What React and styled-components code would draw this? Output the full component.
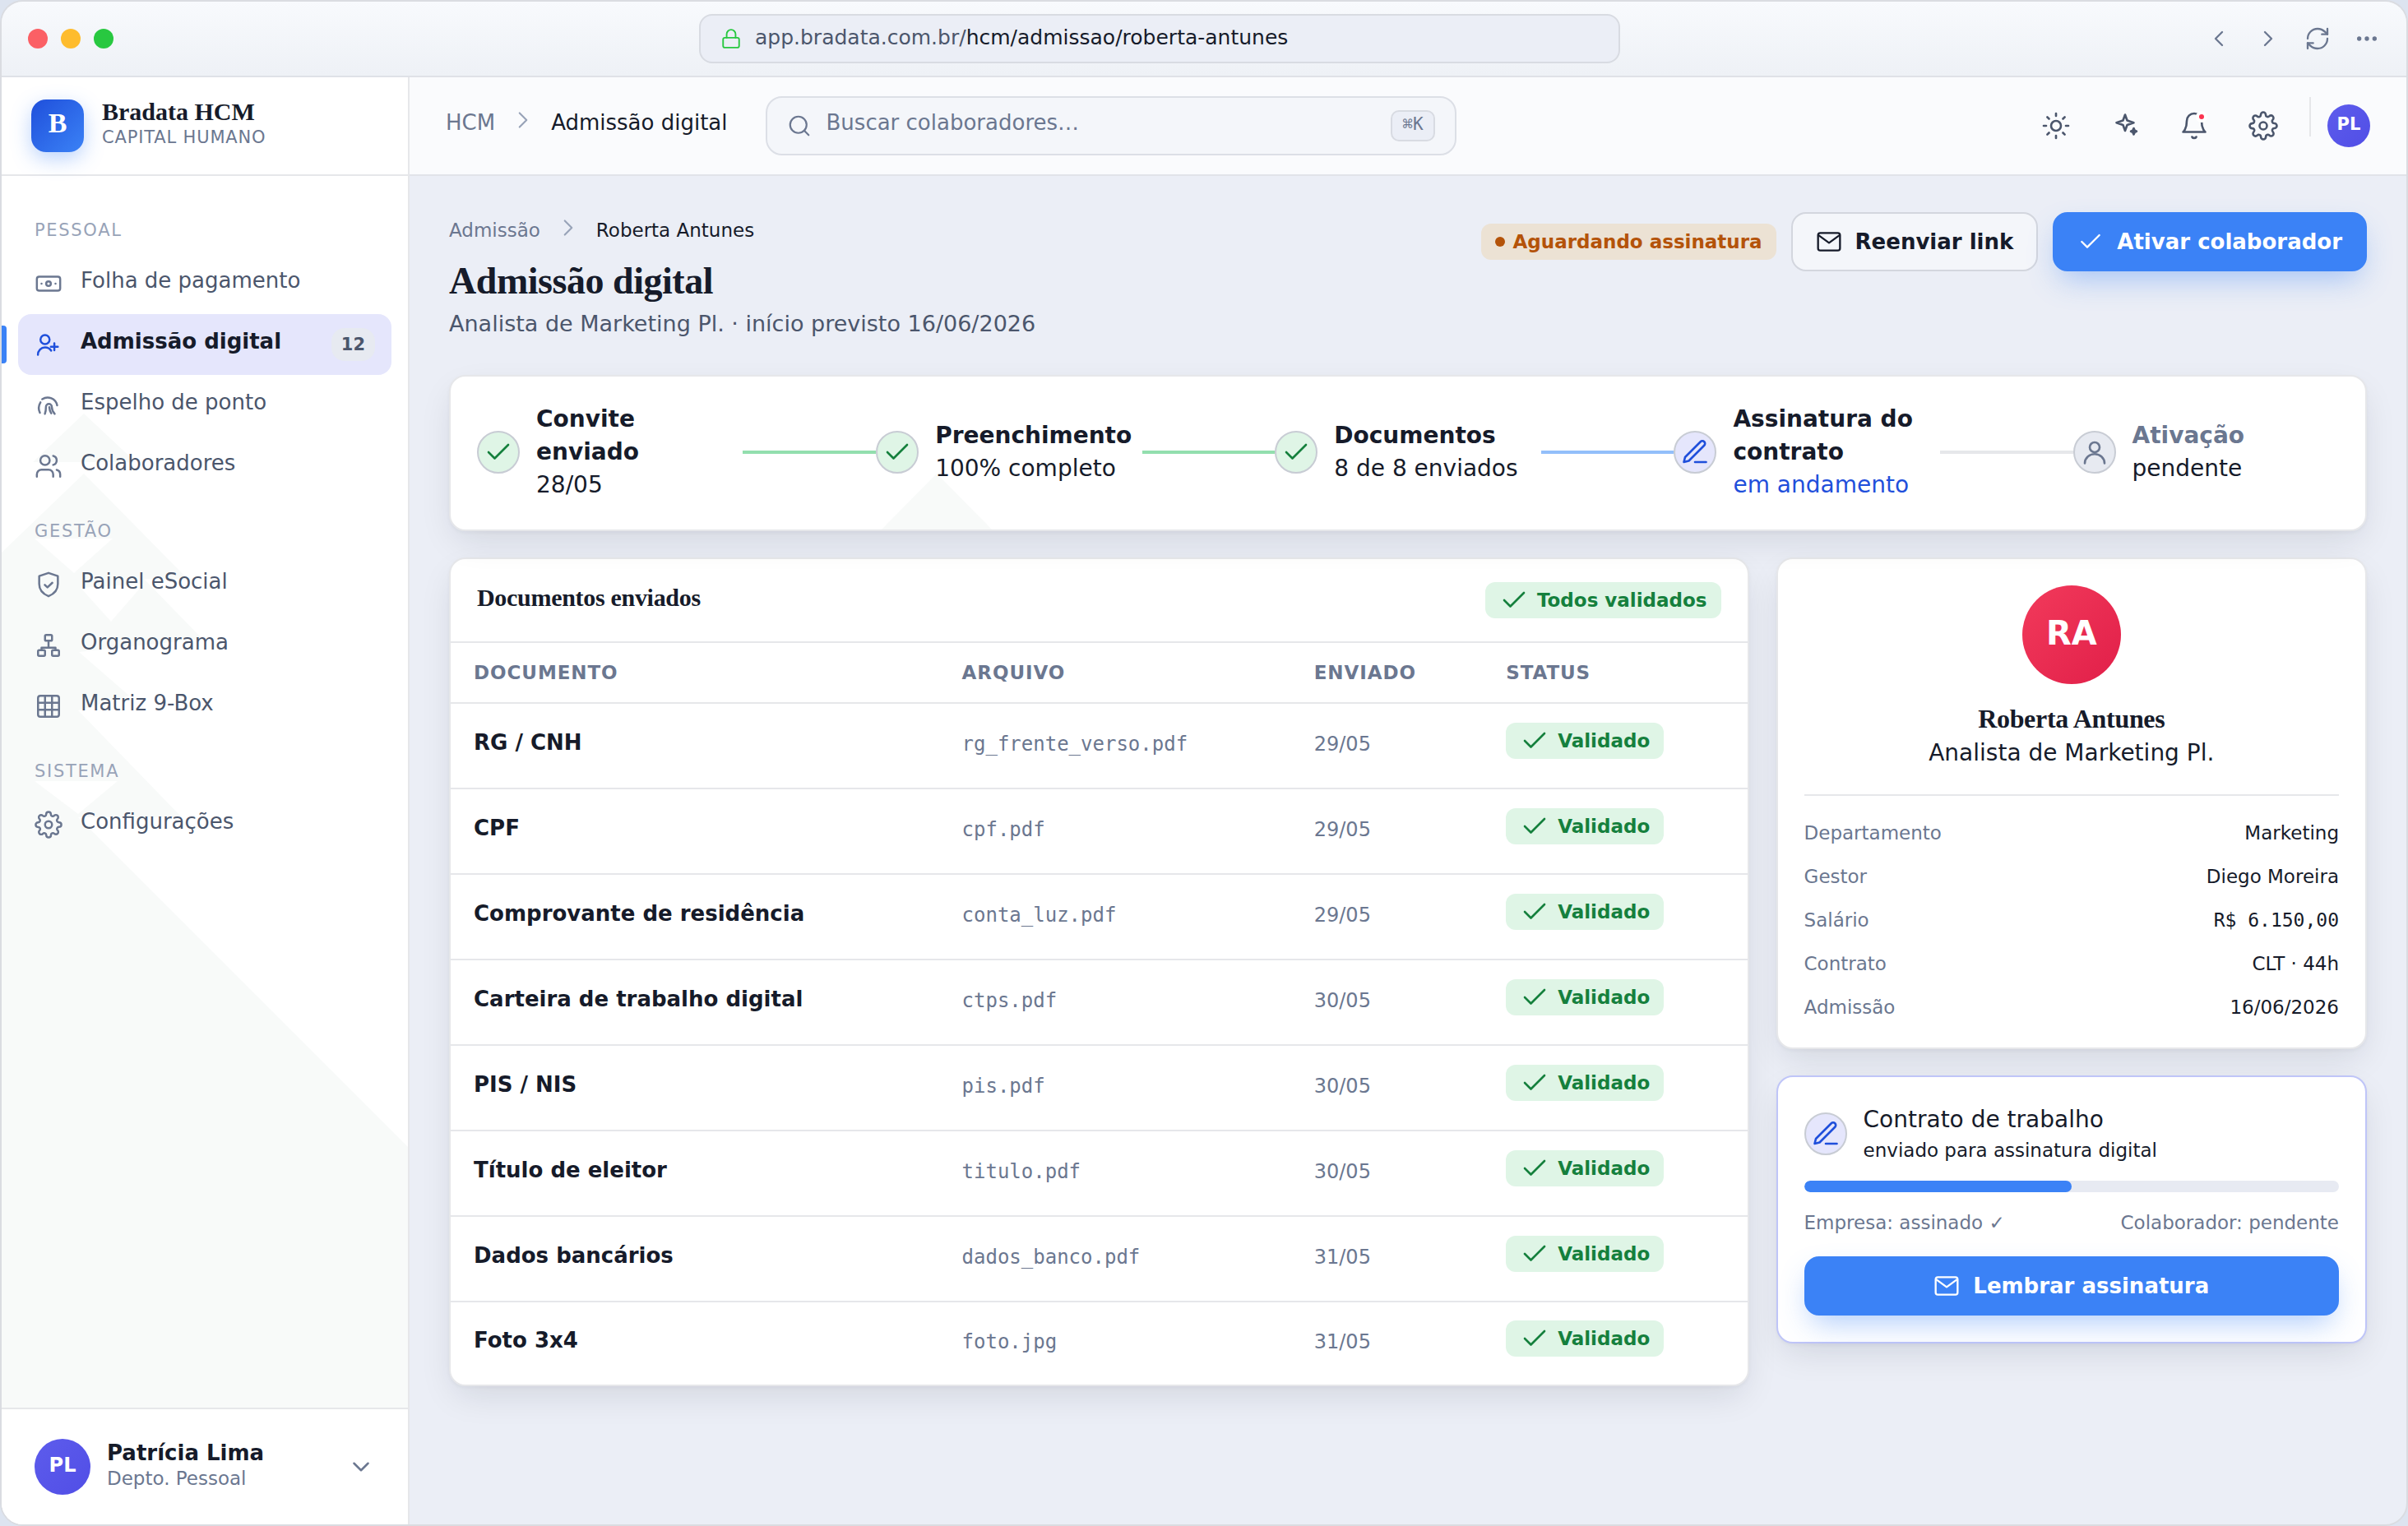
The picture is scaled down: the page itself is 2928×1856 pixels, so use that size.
import React from "react";
import styled, { createGlobalStyle } from "styled-components";
import {
  Banknote,
  Check,
  ChevronDown,
  ChevronLeft,
  ChevronRight,
  Ellipsis,
  Grid3x3,
  Lock,
  RefreshCw,
  Search,
  Sun,
  Users,
} from "lucide-react";
import { FiSettings } from "react-icons/fi";

const COLORS = {
  ink: "#161b2a",
  slate: "#4b566c",
  muted: "#6b7790",
  faint: "#98a3b8",
  line: "#e6e7ea",
  control: "#d8dbe2",
  canvas: "#ebeef6",
  surface: "#f4f6fa",
  primary: "#3b82f6",
  primaryDark: "#1f4fdb",
  primarySoft: "#e5e6fc",
  success: "#15803d",
  successSoft: "#dff5e6",
  warning: "#b45309",
  warningSoft: "#ece2d4",
  facet: "#f8faf9",
};

const FONTS = {
  sans: `"DejaVu Sans", sans-serif`,
  serif: `"Liberation Serif", serif`,
  mono: `"DejaVu Sans Mono", monospace`,
};

/* Icons that the packages do not have in this cut */

const Glyph = ({ size, children, ...rest }) => (
  <svg
    width={size}
    height={size}
    viewBox="0 0 24 24"
    fill="none"
    stroke="currentColor"
    strokeWidth={1.75}
    strokeLinecap="round"
    strokeLinejoin="round"
    aria-hidden="true"
    {...rest}
  >
    {children}
  </svg>
);

const UserPlusIcon = (props) => (
  <Glyph {...props}>
    <circle cx="9" cy="7.8" r="3.9" />
    <path d="M2.9 20.9c0-3.6 2.7-6.4 6.1-6.4 2.2 0 4.1 1 5.3 2.8" />
    <path d="M17 11v6M14 14h6" />
  </Glyph>
);

const FingerprintIcon = (props) => (
  <Glyph {...props}>
    <path d="M6.6 6.7A8.3 8.3 0 0 1 19.4 12" />
    <path d="M5.1 9.4a9.6 9.6 0 0 0-.5 9" />
    <path d="M8.9 19.3c.7-1.7.9-3.5.9-6a2.5 2.5 0 0 1 5 0c0 2.4.9 4.3 2.5 6" />
    <path d="M12.7 13.5c.1 2.1.6 3.8 1.6 5.3" />
  </Glyph>
);

const ShieldIcon = (props) => (
  <Glyph {...props}>
    <path d="M12 2l8 2.7v6.8c0 5-3.3 8.6-8 10.5-4.7-1.9-8-5.5-8-10.5V4.7z" />
    <path d="M8.8 12.2l2.3 2.2 4.2-4" />
  </Glyph>
);

const OrgIcon = (props) => (
  <Glyph {...props}>
    <rect x="9" y="3" width="6" height="5" rx="1" />
    <rect x="3" y="16" width="6" height="5" rx="1" />
    <rect x="15" y="16" width="6" height="5" rx="1" />
    <path d="M12 8v5.5M6 16v-2h12v2" />
  </Glyph>
);

const SparklesIcon = (props) => (
  <Glyph {...props}>
    <path d="M12 3l1.7 4.7L19 9.5l-5.3 1.8L12 16l-1.7-4.7L5 9.5l5.3-1.8z" />
    <path
      fill="currentColor"
      d="M19 14l.8 1.8 1.5.7-1.5.7L19 19l-.8-1.8-1.5-.7 1.5-.7z"
    />
  </Glyph>
);

const BellIcon = (props) => (
  <Glyph {...props}>
    <path d="M6 8a6 6 0 0 1 12 0c0 7 3 9 3 9H3s3-2 3-9" />
    <path d="M10.3 21a1.94 1.94 0 0 0 3.4 0" />
  </Glyph>
);

const MailIcon = (props) => (
  <Glyph {...props}>
    <rect x="2" y="4" width="20" height="16" rx="2" />
    <path d="M3 6.5l9 6.5 9-6.5" />
  </Glyph>
);

const PenIcon = (props) => (
  <Glyph {...props}>
    <path d="M12 20h9" />
    <path d="M16.5 3.5a2.12 2.12 0 0 1 3 3L7 19l-4 1 1-4Z" />
  </Glyph>
);

const PersonIcon = (props) => (
  <Glyph {...props}>
    <circle cx="12" cy="8" r="4" />
    <path d="M4 21a8 7.5 0 0 1 16 0" />
  </Glyph>
);

const NAV = [
  {
    title: "Pessoal",
    items: [
      { label: "Folha de pagamento", icon: Banknote },
      { label: "Admissão digital", icon: UserPlusIcon, active: true, count: 12 },
      { label: "Espelho de ponto", icon: FingerprintIcon },
      { label: "Colaboradores", icon: Users },
    ],
  },
  {
    title: "Gestão",
    items: [
      { label: "Painel eSocial", icon: ShieldIcon },
      { label: "Organograma", icon: OrgIcon },
      { label: "Matriz 9-Box", icon: Grid3x3 },
    ],
  },
  {
    title: "Sistema",
    items: [{ label: "Configurações", icon: FiSettings }],
  },
];

const STEPS = [
  { title: "Convite enviado", detail: "28/05", state: "done" },
  { title: "Preenchimento", detail: "100% completo", state: "done" },
  { title: "Documentos", detail: "8 de 8 enviados", state: "done" },
  { title: "Assinatura do contrato", detail: "em andamento", state: "current" },
  { title: "Ativação", detail: "pendente", state: "pending" },
];

const STEP_ICONS = { done: Check, current: PenIcon, pending: PersonIcon };

const DOCUMENTS = [
  { name: "RG / CNH", file: "rg_frente_verso.pdf", sent: "29/05" },
  { name: "CPF", file: "cpf.pdf", sent: "29/05" },
  { name: "Comprovante de residência", file: "conta_luz.pdf", sent: "29/05" },
  { name: "Carteira de trabalho digital", file: "ctps.pdf", sent: "30/05" },
  { name: "PIS / NIS", file: "pis.pdf", sent: "30/05" },
  { name: "Título de eleitor", file: "titulo.pdf", sent: "30/05" },
  { name: "Dados bancários", file: "dados_banco.pdf", sent: "31/05" },
  { name: "Foto 3x4", file: "foto.jpg", sent: "31/05" },
];

const FACTS = [
  { label: "Departamento", value: "Marketing" },
  { label: "Gestor", value: "Diego Moreira" },
  { label: "Salário", value: "R$ 6.150,00", mono: true },
  { label: "Contrato", value: "CLT · 44h" },
  { label: "Admissão", value: "16/06/2026" },
];

const BrowserBar = () => (
  <Chrome>
    <Lights>
      <Light $color="#fb6065" />
      <Light $color="#febc2e" />
      <Light $color="#28c840" />
    </Lights>
    <AddressBar>
      <Lock size={26} color="#28c840" strokeWidth={1.75} />
      <Address>
        app.bradata.com.br/<strong>hcm/admissao/roberta-antunes</strong>
      </Address>
    </AddressBar>
    <ChromeActions>
      <ChromeButton aria-label="Voltar">
        <ChevronLeft size={32} strokeWidth={1.75} />
      </ChromeButton>
      <ChromeButton aria-label="Avançar">
        <ChevronRight size={32} strokeWidth={1.75} />
      </ChromeButton>
      <ChromeButton aria-label="Recarregar">
        <RefreshCw size={32} strokeWidth={1.75} />
      </ChromeButton>
      <ChromeButton aria-label="Mais">
        <Ellipsis size={32} strokeWidth={2} />
      </ChromeButton>
    </ChromeActions>
  </Chrome>
);

const Sidebar = () => (
  <Aside>
    <Brand>
      <Logo>B</Logo>
      <TextPair>
        <BrandName>Bradata HCM</BrandName>
        <BrandTagline>Capital humano</BrandTagline>
      </TextPair>
    </Brand>
    <Nav>
      <NavBackdrop aria-hidden="true">
        <path
          fill={COLORS.facet}
          d="M100 289l63 59H38zM100 362L226 490h-53l71 73-150 16 61 53-62 18 126 130H93l401 401v1500H0V458z"
        />
        <path
          fill="#fff"
          d="M40 441h95l-47 42zM96 501l77-5-40 46zM40 736h101l-48 40z"
        />
      </NavBackdrop>
      {NAV.map((group) => (
        <NavGroup key={group.title}>
          <NavTitle>{group.title}</NavTitle>
          {group.items.map(({ label, icon: Icon, active, count }) => (
            <NavItem key={label} href="#" $active={active}>
              <Icon size={34} strokeWidth={1.75} />
              <NavLabel>{label}</NavLabel>
              {count && <Count>{count}</Count>}
            </NavItem>
          ))}
        </NavGroup>
      ))}
    </Nav>
    <Account>
      <Avatar $size={68} $fontSize={24}>
        PL
      </Avatar>
      <TextPair>
        <AccountName>Patrícia Lima</AccountName>
        <AccountRole>Depto. Pessoal</AccountRole>
      </TextPair>
      <ChevronDown size={34} strokeWidth={1.75} color={COLORS.muted} />
    </Account>
  </Aside>
);

const TopBar = () => (
  <Header>
    <TopCrumbs>
      <a href="#">HCM</a>
      <ChevronRight size={34} strokeWidth={1.5} />
      <strong>Admissão digital</strong>
    </TopCrumbs>
    <SearchBox>
      <Search size={30} strokeWidth={1.75} />
      <SearchInput
        type="search"
        aria-label="Buscar colaboradores"
        placeholder="Buscar colaboradores…"
      />
      <Shortcut>⌘K</Shortcut>
    </SearchBox>
    <Tools>
      <ToolButton aria-label="Tema">
        <Sun size={36} strokeWidth={1.75} />
      </ToolButton>
      <ToolButton aria-label="Assistente">
        <SparklesIcon size={36} />
      </ToolButton>
      <ToolButton aria-label="Notificações">
        <BellIcon size={36} />
        <UnreadDot />
      </ToolButton>
      <ToolButton aria-label="Configurações">
        <FiSettings size={36} strokeWidth={1.75} />
      </ToolButton>
    </Tools>
    <Divider />
    <Avatar $size={52} $fontSize={21}>
      PL
    </Avatar>
  </Header>
);

const Stepper = () => (
  <StepsCard>
    <StepsBackdrop width="134" height="68" aria-hidden="true">
      <path fill={COLORS.facet} d="M67 0l67 68H0z" />
    </StepsBackdrop>
    {STEPS.map(({ title, detail, state }, index) => {
      const Icon = STEP_ICONS[state];
      return (
        <React.Fragment key={title}>
          {index > 0 && <Connector $state={state} />}
          <Step>
            <StepBadge $state={state}>
              <Icon size={36} strokeWidth={1.75} />
            </StepBadge>
            <StepText>
              <StepTitle $state={state}>{title}</StepTitle>
              <StepDetail $state={state}>{detail}</StepDetail>
            </StepText>
          </Step>
        </React.Fragment>
      );
    })}
  </StepsCard>
);

const Documents = () => (
  <Card>
    <CardHeader>
      <CardTitle>Documentos enviados</CardTitle>
      <Tag $tone="success">
        <Check size={36} strokeWidth={1.75} />
        Todos validados
      </Tag>
    </CardHeader>
    <Table>
      <thead>
        <tr>
          <HeadCell scope="col">Documento</HeadCell>
          <HeadCell scope="col">Arquivo</HeadCell>
          <HeadCell scope="col">Enviado</HeadCell>
          <HeadCell scope="col">Status</HeadCell>
        </tr>
      </thead>
      <tbody>
        {DOCUMENTS.map(({ name, file, sent }) => (
          <Row key={file}>
            <NameCell>{name}</NameCell>
            <FileCell>{file}</FileCell>
            <MutedCell>{sent}</MutedCell>
            <Cell>
              <Tag $tone="success">
                <Check size={36} strokeWidth={1.75} />
                Validado
              </Tag>
            </Cell>
          </Row>
        ))}
      </tbody>
    </Table>
  </Card>
);

const Profile = () => (
  <PaddedCard>
    <ProfileHead>
      <Avatar $size={120} $fontSize={40} $tone="rose">
        RA
      </Avatar>
      <ProfileName>Roberta Antunes</ProfileName>
      <ProfileRole>Analista de Marketing Pl.</ProfileRole>
    </ProfileHead>
    <Facts>
      {FACTS.map(({ label, value, mono }) => (
        <Fact key={label}>
          <dt>{label}</dt>
          <FactValue $mono={mono}>{value}</FactValue>
        </Fact>
      ))}
    </Facts>
  </PaddedCard>
);

const Contract = ({ progress }) => (
  <PaddedCard $highlight>
    <ContractHead>
      <StepBadge $state="current">
        <PenIcon size={36} />
      </StepBadge>
      <div>
        <ContractTitle>Contrato de trabalho</ContractTitle>
        <ContractText>enviado para assinatura digital</ContractText>
      </div>
    </ContractHead>
    <ProgressTrack
      role="progressbar"
      aria-label="Assinaturas"
      aria-valuenow={progress}
      aria-valuemin={0}
      aria-valuemax={100}
    >
      <ProgressFill style={{ width: `${progress}%` }} />
    </ProgressTrack>
    <Signatures>
      <span>Empresa: assinado ✓</span>
      <span>Colaborador: pendente</span>
    </Signatures>
    <Button $primary $block>
      <MailIcon size={32} />
      Lembrar assinatura
    </Button>
  </PaddedCard>
);

const App = () => (
  <>
    <GlobalStyle />
    <Window>
      <BrowserBar />
      <Shell>
        <Sidebar />
        <Main>
          <TopBar />
          <Content>
            <PageHeader>
              <div>
                <PageCrumbs>
                  <a href="#">Admissão</a>
                  <ChevronRight size={34} strokeWidth={1.5} />
                  <strong>Roberta Antunes</strong>
                </PageCrumbs>
                <PageTitle>Admissão digital</PageTitle>
                <PageSubtitle>
                  Analista de Marketing Pl. · início previsto 16/06/2026
                </PageSubtitle>
              </div>
              <PageActions>
                <Tag $tone="warning">
                  <TagDot />
                  Aguardando assinatura
                </Tag>
                <Button>
                  <MailIcon size={32} />
                  Reenviar link
                </Button>
                <Button $primary>
                  <Check size={32} strokeWidth={1.75} />
                  Ativar colaborador
                </Button>
              </PageActions>
            </PageHeader>
            <Stepper />
            <Columns>
              <Documents />
              <SideColumn>
                <Profile />
                <Contract progress={50} />
              </SideColumn>
            </Columns>
          </Content>
        </Main>
      </Shell>
    </Window>
  </>
);

const GlobalStyle = createGlobalStyle`
  *, *::before, *::after {
    box-sizing: border-box;
  }

  body {
    margin: 0;
    background: #dde4f0;
    color: ${COLORS.ink};
    font-family: ${FONTS.sans};
    font-size: 26px;
    line-height: 38px;
  }

  a {
    color: inherit;
    text-decoration: none;
  }

  button, input {
    font: inherit;
    color: inherit;
  }

  h1, h2, p, dl, dd {
    margin: 0;
  }

  svg {
    flex-shrink: 0;
  }
`;

const Window = styled.div`
  display: flex;
  flex-direction: column;
  min-height: 100vh;
  border: 2px solid #dadce1;
  border-radius: 28px;
  overflow: hidden;
  background: ${COLORS.canvas};
`;

const Chrome = styled.div`
  display: flex;
  align-items: center;
  height: 92px;
  padding: 0 32px;
  background: linear-gradient(#f8fafd, #eef1f6);
  border-bottom: 2px solid #dfe1e7;
`;

const Lights = styled.div`
  display: flex;
  gap: 16px;
`;

const Light = styled.span`
  width: 24px;
  height: 24px;
  border-radius: 50%;
  background: ${(p) => p.$color};
`;

const AddressBar = styled.div`
  display: flex;
  align-items: center;
  gap: 16px;
  width: 100%;
  max-width: 1120px;
  height: 60px;
  margin: 0 auto;
  padding: 0 24px;
  background: ${COLORS.canvas};
  border: 2px solid ${COLORS.control};
  border-radius: 16px;
`;

const Address = styled.span`
  padding-bottom: 2px;
  font-size: 25px;
  color: ${COLORS.slate};

  strong {
    font-weight: 400;
    color: ${COLORS.ink};
  }
`;

const ChromeActions = styled.div`
  display: flex;
  gap: 28px;
`;

const ChromeButton = styled.button`
  display: flex;
  padding: 0;
  border: 0;
  background: none;
  color: ${COLORS.muted};
`;

const Shell = styled.div`
  display: grid;
  grid-template-columns: 496px minmax(0, 1fr);
  flex: 1;
`;

const Aside = styled.aside`
  display: flex;
  flex-direction: column;
  background: #fff;
  border-right: 2px solid ${COLORS.line};
`;

const Brand = styled.div`
  display: flex;
  align-items: center;
  gap: 22px;
  height: 120px;
  padding: 0 36px;
  border-bottom: 2px solid ${COLORS.line};
`;

const Logo = styled.span`
  display: flex;
  justify-content: center;
  width: 64px;
  height: 64px;
  border-radius: 18px;
  background: linear-gradient(135deg, ${COLORS.primaryDark}, ${COLORS.primary});
  box-shadow: 0 8px 24px rgba(59, 130, 246, 0.35);
  color: #fff;
  font-family: ${FONTS.serif};
  font-size: 34px;
  font-weight: 700;
  line-height: 58px;
`;

const TextPair = styled.div`
  display: flex;
  flex-direction: column;
  flex: 1;
  padding-bottom: 4px;
  text-align: left;
`;

const BrandName = styled.span`
  font-family: ${FONTS.serif};
  font-size: 30px;
  font-weight: 700;
  line-height: 32px;
`;

const BrandTagline = styled.span`
  font-size: 21px;
  line-height: 30px;
  letter-spacing: 0.04em;
  text-transform: uppercase;
  color: ${COLORS.muted};
`;

const Nav = styled.nav`
  position: relative;
  flex: 1;
  padding: 24px 20px;
`;

const NavBackdrop = styled.svg`
  position: absolute;
  top: 0;
  left: 0;
  width: 100%;
  height: 100%;
`;

const NavGroup = styled.div`
  position: relative;
`;

const NavTitle = styled.div`
  height: 70px;
  padding: 27px 20px 0;
  font-size: 21px;
  line-height: 30px;
  letter-spacing: 0.08em;
  text-transform: uppercase;
  color: ${COLORS.faint};
`;

const NavItem = styled.a`
  position: relative;
  display: flex;
  align-items: center;
  gap: 22px;
  height: 74px;
  padding: 0 20px;
  border-radius: 16px;
  color: ${(p) => (p.$active ? COLORS.ink : COLORS.slate)};
  font-weight: ${(p) => (p.$active ? 700 : 400)};
  background: ${(p) => (p.$active ? COLORS.primarySoft : "none")};

  svg {
    color: ${(p) => (p.$active ? COLORS.primaryDark : COLORS.muted)};
  }

  /* marker on the window edge */
  &::before {
    content: "";
    display: ${(p) => (p.$active ? "block" : "none")};
    position: absolute;
    left: -20px;
    top: 14px;
    bottom: 14px;
    width: 6px;
    border-radius: 0 4px 4px 0;
    background: ${COLORS.primary};
  }
`;

const NavLabel = styled.span`
  flex: 1;
  padding-bottom: 8px;
`;

const Count = styled.span`
  padding: 0 12px;
  border-radius: 16px;
  background: #e7eaf1;
  color: ${COLORS.slate};
  font-size: 21px;
  line-height: 40px;
`;

const Account = styled.button`
  display: flex;
  align-items: center;
  gap: 20px;
  padding: 36px 40px;
  border: 0;
  border-top: 2px solid ${COLORS.line};
  background: #fff;
`;

const AccountName = styled.span`
  font-weight: 700;
  line-height: 32px;
`;

const AccountRole = styled.span`
  font-size: 23px;
  line-height: 30px;
  color: ${COLORS.muted};
`;

const Avatar = styled.span`
  display: flex;
  align-items: center;
  justify-content: center;
  flex-shrink: 0;
  width: ${(p) => p.$size}px;
  height: ${(p) => p.$size}px;
  padding-bottom: 4px;
  border-radius: 50%;
  background: ${(p) =>
    p.$tone === "rose"
      ? "linear-gradient(135deg, #f23a5b, #e11f49)"
      : "linear-gradient(135deg, #5d5cec, #514ee6)"};
  color: #fff;
  font-size: ${(p) => p.$fontSize}px;
  font-weight: 700;
`;

const Main = styled.div`
  display: flex;
  flex-direction: column;
`;

const Header = styled.header`
  display: flex;
  align-items: center;
  height: 120px;
  padding: 0 44px;
  background: #fafbfd;
  border-bottom: 2px solid #e1e3e9;
`;

const Crumbs = styled.nav`
  display: flex;
  align-items: center;
  gap: 17px;
  color: ${COLORS.muted};

  strong {
    font-weight: 400;
    color: ${COLORS.ink};
  }

  svg {
    margin-bottom: 6px;
    color: ${COLORS.faint};
  }
`;

const TopCrumbs = styled(Crumbs)`
  margin-right: 46px;
  padding-bottom: 8px;
  white-space: nowrap;
`;

const SearchBox = styled.label`
  display: flex;
  align-items: center;
  gap: 18px;
  flex: 1;
  max-width: 840px;
  height: 72px;
  padding: 0 24px;
  background: ${COLORS.surface};
  border: 2px solid #dcdfe6;
  border-radius: 20px;
  color: ${COLORS.muted};
`;

const SearchInput = styled.input`
  flex: 1;
  min-width: 0;
  padding: 0 0 8px;
  border: 0;
  outline: 0;
  background: none;

  &::placeholder {
    color: ${COLORS.muted};
    opacity: 1;
  }
`;

const Shortcut = styled.kbd`
  padding: 0 12px 4px;
  background: ${COLORS.canvas};
  border: 2px solid ${COLORS.control};
  border-radius: 10px;
  font-family: ${FONTS.mono};
  font-size: 21px;
  line-height: 30px;
`;

const Tools = styled.div`
  display: flex;
  gap: 12px;
  margin-left: auto;
`;

const ToolButton = styled.button`
  position: relative;
  display: flex;
  align-items: center;
  justify-content: center;
  width: 72px;
  height: 72px;
  padding: 0;
  border: 0;
  background: none;
  color: ${COLORS.slate};
`;

const UnreadDot = styled.span`
  position: absolute;
  top: 22px;
  right: 24px;
  width: 6px;
  height: 6px;
  border-radius: 50%;
  background: #fb3350;
  box-shadow: 0 0 0 4px #fff;
`;

const Divider = styled.span`
  align-self: flex-start;
  width: 2px;
  height: 48px;
  margin: 24px 20px 0;
  background: ${COLORS.line};
`;

const Content = styled.main`
  display: flex;
  flex-direction: column;
  gap: 32px;
  padding: 44px 48px;
`;

const PageHeader = styled.div`
  display: flex;
  align-items: flex-start;
  justify-content: space-between;
  padding-bottom: 10px;
`;

const PageCrumbs = styled(Crumbs)`
  height: 38px;
  padding-top: 6px;
  font-size: 23px;
`;

const PageTitle = styled.h1`
  margin-top: 18px;
  font-family: ${FONTS.serif};
  font-size: 46px;
  font-weight: 700;
  line-height: 56px;
  letter-spacing: -0.01em;
`;

const PageSubtitle = styled.p`
  margin-top: 4px;
  font-size: 27px;
  line-height: 40px;
  color: ${COLORS.slate};
`;

const PageActions = styled.div`
  display: flex;
  align-items: center;
  gap: 18px;
`;

const Button = styled.button`
  display: ${(p) => (p.$block ? "flex" : "inline-flex")};
  align-items: center;
  justify-content: center;
  gap: 16px;
  width: ${(p) => (p.$block ? "100%" : "auto")};
  height: 72px;
  padding: 0 28px;
  border: 2px solid ${(p) => (p.$primary ? COLORS.primary : "#d3d6de")};
  border-radius: 18px;
  background: ${(p) => (p.$primary ? COLORS.primary : COLORS.surface)};
  box-shadow: ${(p) =>
    p.$primary ? "0 16px 36px -8px rgba(59, 130, 246, 0.42)" : "none"};
  color: ${(p) => (p.$primary ? "#fff" : COLORS.ink)};
  font-weight: 700;
  white-space: nowrap;
`;

const Tag = styled.span`
  display: inline-flex;
  align-items: center;
  gap: 10px;
  height: 44px;
  padding: 0 17px;
  border-radius: 12px;
  background: ${(p) =>
    p.$tone === "warning" ? COLORS.warningSoft : COLORS.successSoft};
  color: ${(p) => (p.$tone === "warning" ? COLORS.warning : COLORS.success)};
  font-size: 23px;
  font-weight: 700;
  white-space: nowrap;
`;

const TagDot = styled.span`
  width: 12px;
  height: 12px;
  border-radius: 50%;
  background: currentColor;
`;

const Card = styled.section`
  background: #fff;
  border: 2px solid ${(p) => (p.$highlight ? "#bfc5f8" : COLORS.line)};
  border-radius: 20px;
  box-shadow: 0 2px 4px rgba(15, 23, 42, 0.04),
    0 16px 44px -8px rgba(15, 23, 42, 0.12);
`;

const PaddedCard = styled(Card)`
  padding: 32px;
`;

const StepsCard = styled(Card)`
  position: relative;
  display: flex;
  align-items: center;
  padding: 32px 32px 34px;
`;

const StepsBackdrop = styled.svg`
  position: absolute;
  left: 524px;
  bottom: 0;
`;

const Step = styled.div`
  position: relative;
  display: flex;
  align-items: center;
  flex: 2 1 0;
  gap: 20px;
  min-width: 0;
`;

const stepTones = {
  done: { color: COLORS.success, soft: COLORS.successSoft, line: "#93dfae" },
  current: { color: COLORS.primaryDark, soft: COLORS.primarySoft, line: "#93bffa" },
  pending: { color: COLORS.muted, soft: "#e7eaf1", line: COLORS.line },
};

const StepBadge = styled.span`
  display: flex;
  align-items: center;
  justify-content: center;
  flex-shrink: 0;
  width: 52px;
  height: 52px;
  border: 2px solid #c8ccd4;
  border-radius: 50%;
  background: ${(p) => stepTones[p.$state].soft};
  color: ${(p) => stepTones[p.$state].color};
`;

const StepText = styled.div`
  font-size: 28px;
  line-height: 40px;
`;

const StepTitle = styled.div`
  font-weight: 700;
  color: ${(p) => (p.$state === "pending" ? COLORS.muted : COLORS.ink)};
`;

const StepDetail = styled.div`
  color: ${(p) => (p.$state === "current" ? COLORS.primaryDark : COLORS.ink)};
`;

const Connector = styled.span`
  flex: 1 1 0;
  height: 4px;
  background: ${(p) => stepTones[p.$state].line};
`;

const Columns = styled.div`
  display: grid;
  grid-template-columns: minmax(0, 11fr) minmax(0, 5fr);
  align-items: start;
  gap: 33px;
`;

const SideColumn = styled.div`
  display: flex;
  flex-direction: column;
  gap: 32px;
`;

const CardHeader = styled.div`
  display: flex;
  align-items: center;
  justify-content: space-between;
  padding: 28px 32px;
  border-bottom: 2px solid ${COLORS.line};
`;

const CardTitle = styled.h2`
  padding-bottom: 6px;
  font-family: ${FONTS.serif};
  font-size: 30px;
  font-weight: 700;
  letter-spacing: -0.01em;
`;

const Table = styled.table`
  width: 100%;
  border-collapse: separate;
  border-spacing: 0;
`;

const HeadCell = styled.th`
  height: 74px;
  padding: 0 28px;
  border-bottom: 2px solid ${COLORS.line};
  font-size: 23px;
  letter-spacing: 0.04em;
  text-align: left;
  text-transform: uppercase;
  color: ${COLORS.muted};
`;

const Cell = styled.td`
  height: 104px;
  padding: 0 28px 6px;
  border-bottom: 2px solid ${COLORS.line};
`;

const NameCell = styled(Cell)`
  padding-bottom: 8px;
  font-weight: 700;
`;

const MutedCell = styled(Cell)`
  padding-bottom: 4px;
  font-size: 24px;
  color: ${COLORS.muted};
`;

const FileCell = styled(MutedCell)`
  font-family: ${FONTS.mono};
`;

const Row = styled.tr`
  &:last-child td {
    height: 100px;
    border-bottom: 0;
  }
`;

const ProfileHead = styled.div`
  display: flex;
  flex-direction: column;
  align-items: center;
  padding-bottom: 30px;
  border-bottom: 2px solid ${COLORS.line};
`;

const ProfileName = styled.h2`
  margin-top: 20px;
  font-family: ${FONTS.serif};
  font-size: 32px;
  font-weight: 700;
  line-height: 44px;
  letter-spacing: -0.01em;
`;

const ProfileRole = styled.p`
  font-size: 28px;
  line-height: 40px;
`;

const Facts = styled.dl`
  display: flex;
  flex-direction: column;
  gap: 19px;
  padding-top: 28px;
  font-size: 23px;
  line-height: 34px;
`;

const Fact = styled.div`
  display: flex;
  justify-content: space-between;
  color: ${COLORS.muted};
`;

const FactValue = styled.dd`
  color: ${COLORS.ink};
  font-family: ${(p) => (p.$mono ? FONTS.mono : FONTS.sans)};
`;

const ContractHead = styled.div`
  display: flex;
  align-items: center;
  gap: 20px;
`;

const ContractTitle = styled.p`
  font-size: 28px;
  line-height: 40px;
`;

const ContractText = styled.p`
  font-size: 23px;
  line-height: 34px;
`;

const ProgressTrack = styled.div`
  height: 14px;
  margin: 20px 0;
  border-radius: 7px;
  background: #e7eaf2;
  overflow: hidden;
`;

const ProgressFill = styled.div`
  height: 100%;
  border-radius: inherit;
  background: ${COLORS.primary};
`;

const Signatures = styled.div`
  display: flex;
  justify-content: space-between;
  margin-bottom: 24px;
  font-size: 23px;
  line-height: 34px;
  color: ${COLORS.muted};
`;

export default App;
